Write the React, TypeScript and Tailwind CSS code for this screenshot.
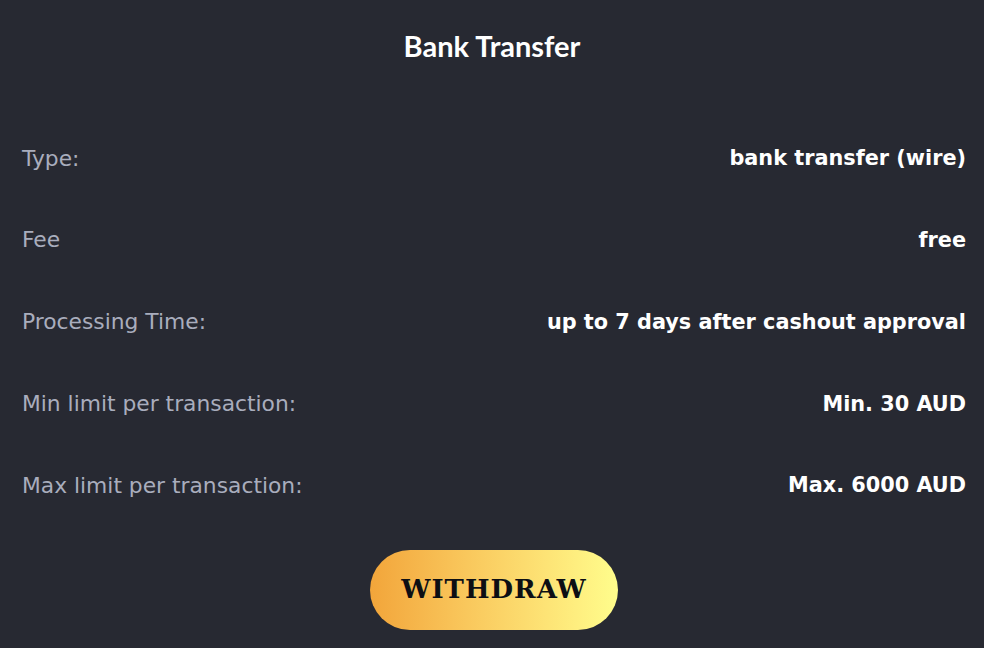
const rows = [
  { label: "Type:", value: "bank transfer (wire)" },
  { label: "Fee", value: "free" },
  { label: "Processing Time:", value: "up to 7 days after cashout approval" },
  { label: "Min limit per transaction:", value: "Min. 30 AUD" },
  { label: "Max limit per transaction:", value: "Max. 6000 AUD" },
];

export default function App() {
  return (
    <div className="min-h-[648px] w-full bg-[#272932] font-['DejaVu_Sans',sans-serif]">
      <h2 className="pt-[28px] text-center font-['Lato',sans-serif] text-[29px] font-bold leading-[36px] text-white">
        Bank Transfer
      </h2>

      <div className="mt-[54px] flex flex-col pl-[22px] pr-[18px]">
        {rows.map((row) => (
          <div
            key={row.label}
            className="flex h-[81.75px] items-center justify-between"
          >
            <span className="text-[21.8px] text-[#a9adbd]">{row.label}</span>
            <span className="text-[20.8px] font-bold text-white">{row.value}</span>
          </div>
        ))}
      </div>

      <div className="mt-[23px] flex justify-center">
        <button className="ml-[4px] flex h-[80px] w-[248px] items-center justify-center rounded-full bg-gradient-to-r from-[#f2a53a] to-[#fffd8c] font-['DejaVu_Serif',serif] text-[26px] font-bold tracking-[1px] text-[#0d0f14]">
          WITHDRAW
        </button>
      </div>
    </div>
  );
}
